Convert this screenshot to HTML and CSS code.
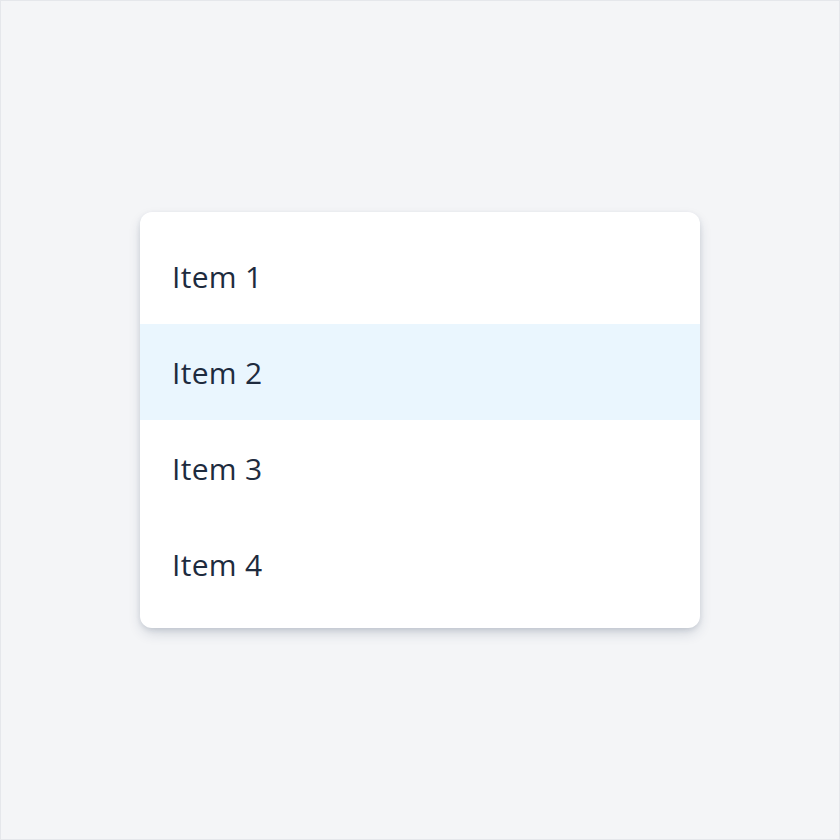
FILE: index.html
```html
<!DOCTYPE html>
<html>
<head>
<meta charset="utf-8">
<link rel="stylesheet" href="styles.css">
</head>
<body>
<div class="page">
  <ul class="menu">
    <li class="item">Item 1</li>
    <li class="item active">Item 2</li>
    <li class="item">Item 3</li>
    <li class="item">Item 4</li>
  </ul>
</div>
</body>
</html>
```
FILE: styles.css
```css
html, body {
  margin: 0;
  padding: 0;
}
body {
  width: 840px;
  height: 840px;
  background: #f4f5f7;
  font-family: "Open Sans", sans-serif;
}
.page {
  box-sizing: border-box;
  width: 840px;
  height: 840px;
  border: 1px solid #e5e7eb;
  display: flex;
  align-items: center;
  justify-content: center;
}
.menu {
  list-style: none;
  margin: 0;
  padding: 16px 0;
  width: 560px;
  background: #ffffff;
  border-radius: 12px;
  box-shadow: 0 6px 14px -2px rgba(30, 50, 80, 0.2), 0 2px 5px rgba(30, 50, 80, 0.1);
}
.item {
  height: 96px;
  display: flex;
  align-items: center;
  padding: 0 32px;
  font-size: 30px;
  letter-spacing: 0.3px;
  color: #1e2b3e;
}
.item.active {
  background: #eaf6fe;
}
```
